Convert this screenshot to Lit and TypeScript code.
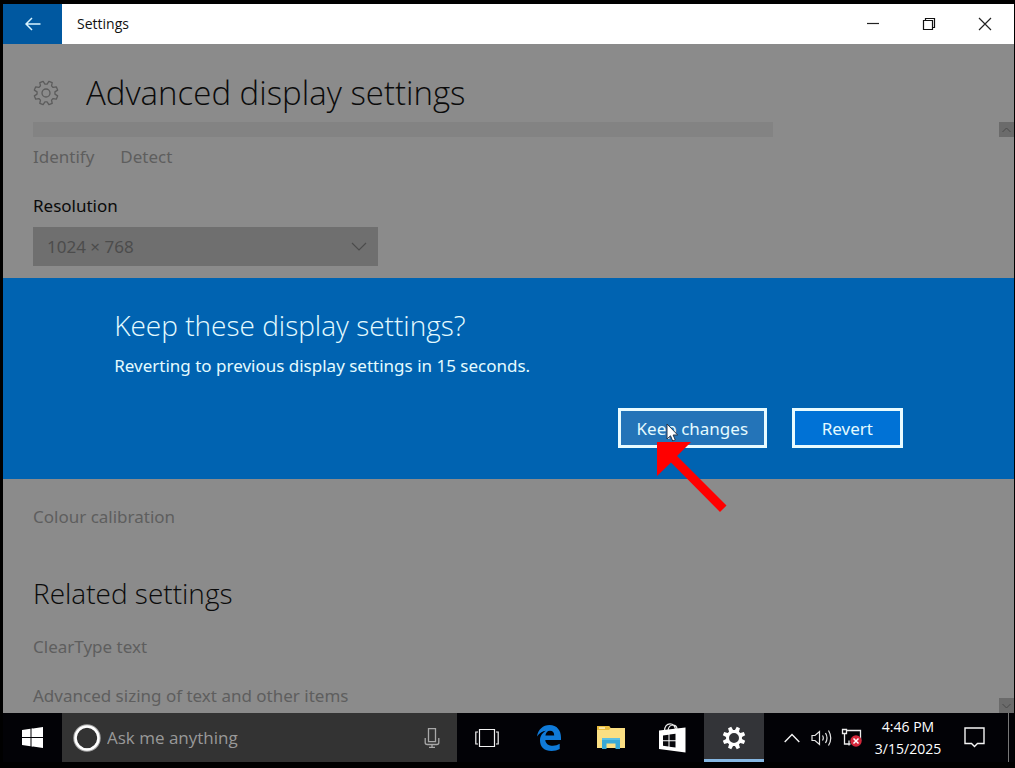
import { LitElement, html, css, svg } from "lit";
import { customElement, state } from "lit/decorators.js";

/** Outline of a cog with eight teeth, centred on 0,0. */
function cog(outer: number, inner: number): string {
  const points: string[] = [];
  const steps: [number, number][] = [
    [-0.36, inner],
    [-0.2, outer],
    [0.2, outer],
    [0.36, inner],
  ];
  for (let tooth = 0; tooth < 8; tooth++) {
    const base = (tooth * Math.PI) / 4 + Math.PI / 8;
    for (const [turn, radius] of steps) {
      const angle = base + turn * 0.75;
      points.push(`${(Math.cos(angle) * radius).toFixed(2)} ${(Math.sin(angle) * radius).toFixed(2)}`);
    }
  }
  return `M${points.join("L")}Z`;
}

const icons = {
  back: svg`<svg width="16" height="14" viewBox="0 0 16 14" fill="none" stroke="#d8f4ff" stroke-width="1.5"><path d="M15.500 7H1.500M7 1L1 7l6 6"/></svg>`,
  minimise: svg`<svg width="14" height="14" viewBox="0 0 14 14" stroke="#222" stroke-width="1.200"><path d="M1 6.500h12"/></svg>`,
  restore: svg`<svg width="14" height="14" viewBox="0 0 14 14" fill="none" stroke="#111" stroke-width="1.200"><path d="M1.500 3.500h9v9h-9zM3.500 3.500v-2h9v9h-2"/></svg>`,
  close: svg`<svg width="14" height="14" viewBox="0 0 14 14" stroke="#222" stroke-width="1.200"><path d="M1 1l12 12M13 1L1 13"/></svg>`,
  cogOutline: svg`<svg width="28" height="28" viewBox="-14 -14 28 28" fill="none" stroke="#5c5c5c" stroke-width="1.300" stroke-linejoin="round"><path d=${cog(12, 9)}/><circle r="4"/></svg>`,
  cogSolid: svg`<svg width="24" height="24" viewBox="-12 -12 24 24" fill="#fff" fill-rule="evenodd"><path d=${cog(11.5, 8) + "M5 0A5 5 0 1 0 -5 0A5 5 0 1 0 5 0Z"}/></svg>`,
  up: svg`<svg width="9" height="6" viewBox="0 0 9 6" fill="none" stroke="#4a4a4a"><path d="M.5 5l4-4 4 4"/></svg>`,
  down: svg`<svg width="9" height="6" viewBox="0 0 9 6" fill="none" stroke="#4a4a4a"><path d="M.5 1l4 4 4-4"/></svg>`,
  dropdown: svg`<svg width="16" height="9" viewBox="0 0 16 9" fill="none" stroke="#4c4c4c" stroke-width="1.200"><path d="M1 1l7 7 7-7"/></svg>`,
  start: svg`<svg width="21" height="21" viewBox="0 0 21 21" fill="#fff"><path d="M0 3l8.500-1.200V10H0zM9.500 1.600L21 0v10H9.500zM0 11h8.500v8.200L0 18zM9.500 11H21v10L9.500 19.400z"/></svg>`,
  ring: svg`<svg width="28" height="28" viewBox="0 0 28 28" fill="none"><circle cx="14" cy="14" r="12" stroke="#a5a5a5" stroke-width="3.500"/><circle cx="14" cy="14" r="11.500" stroke="#fff" stroke-width="2.500"/></svg>`,
  mic: svg`<svg width="16" height="20" viewBox="0 0 16 20" fill="none" stroke="#a8a8a8" stroke-width="1.300"><path d="M4.500.7h7v13h-7zM1.200 10v4.500q0 2 2 2h9.600q2 0 2-2V10M8 16.500v2.800M5 19.300h6"/></svg>`,
  taskView: svg`<svg width="24" height="20" viewBox="0 0 24 20" fill="none" stroke="#f2f2f2" stroke-width="1.200"><path d="M4.500 1.500h15v17h-15zM3 4H.8v12H3M21 4h2.200v12H21"/></svg>`,
  edge: svg`<svg width="24" height="26" viewBox="0 0 24 26" fill="#0f7ad8"><path d="M0 11.500C1 4.500 6 0 12.500 0 20 0 24 5.500 24 12.500V15H8.300c.3 4 3.600 5.800 7.600 5.800 2.500 0 4.800-.8 6.800-2V24c-2.200 1.300-5 2-8.200 2C7.500 26 3 22 3 15.500 3 11 5.500 7.600 9 5.800 5.500 6.200 2.300 8 0 11.500zM8.400 10.500h8.800c0-3-1.300-4.800-4.200-4.800S8.800 7.800 8.400 10.500z"/></svg>`,
  folder: svg`<svg width="28" height="23" viewBox="0 0 28 23"><path d="M0 0h12l1.500 2H28v20H0z" fill="#fbdf83"/><path d="M0 0h12l1.500 2-1.500 2H0z" fill="#e9bd3e"/><path d="M2 1.300h6v1.500H2z" fill="#fff3c4"/><path d="M5 12h18v11h-4.500v-5.500h-9V23H5z" fill="#39a9d6"/><path d="M5 12h18v2H5z" fill="#5cc0e4"/></svg>`,
  store: svg`<svg width="27" height="30" viewBox="0 0 27 30"><path d="M5.500 8C5.500 3 8 .8 11 .8s5 2.200 5.500 5.700M9 7.500C9.500 3.500 11.500 2 14 2s4 1.800 4 4.500" fill="none" stroke="#eee" stroke-width="1.200"/><path d="M0 7.500L26.500 4.500v25L0 26z" fill="#fff"/><path d="M4 12.500l5.500-.8v5.500H4zM10.500 11.500l6-.8v6.500h-6zM4 18.200h5.500v5.300L4 22.700zM10.500 18.200h6v6.300l-6-.8z" fill="#08080c"/></svg>`,
  chevron: svg`<svg width="16" height="10" viewBox="0 0 16 10" fill="none" stroke="#f2f2f2" stroke-width="1.400"><path d="M.7 9L8 1.500 15.300 9"/></svg>`,
  volume: svg`<svg width="22" height="18" viewBox="0 0 22 18" fill="none" stroke="#e6e6e6" stroke-width="1.200"><path d="M1 6.500h3L8.500 2.500v13L4 11.500H1zM11.500 6.500q1.600 2.500 0 5M14.500 4q3 5 0 10M17.500 1.500q4.500 7.500 0 15"/></svg>`,
  network: svg`<svg width="22" height="19" viewBox="0 0 22 19" fill="none" stroke="#ededed" stroke-width="1.300"><path d="M6 2.500h13.500V13M1.500 1.500h4v4h-4zM3.500 5.500v10.500h6M8 12.500v5"/><circle cx="15" cy="13" r="5.700" fill="#d4263a" stroke="none"/><path d="M12.500 10.500l5 5M17.500 10.500l-5 5" stroke="#fff" stroke-width="1.500"/></svg>`,
  action: svg`<svg width="21" height="21" viewBox="0 0 21 21" fill="none" stroke="#f5f5f5" stroke-width="1.400"><path d="M1 1h19v15.500h-6.500L10.500 19.500 7.500 16.500H1z"/></svg>`,
  cursor: svg`<svg width="13" height="19" viewBox="0 0 13 19"><path d="M1 1v15l3.500-3.200L6.700 18l2.600-1.100L7.100 12h4.600z" fill="#fff" stroke="#26364a"/></svg>`,
  pointer: svg`<svg width="70" height="71" viewBox="0 0 70 71"><path d="M0 0h34L20 14l49.500 49.500-6.500 6.500-49-49.500L0 34z" fill="#f00"/></svg>`,
};

@customElement("title-bar")
export class TitleBar extends LitElement {
  static styles = css`
    :host {
      display: flex;
      height: 40px;
      padding-right: 1px;
      background: #fff;
      color: #111;
    }
    button {
      display: grid;
      place-items: center;
      width: 56px;
      padding: 0;
      border: 0;
      background: none;
    }
    .back {
      width: 59px;
      background: #0058a0;
    }
    .name {
      flex: 1;
      margin: 0;
      padding-left: 15px;
      font-size: 14px;
      font-weight: 400;
      line-height: 40px;
    }
  `;

  render() {
    return html`
      <button class="back" aria-label="Back">${icons.back}</button>
      <h1 class="name">Settings</h1>
      <button aria-label="Minimise">${icons.minimise}</button>
      <button aria-label="Restore">${icons.restore}</button>
      <button aria-label="Close">${icons.close}</button>
    `;
  }
}

@customElement("settings-page")
export class SettingsPage extends LitElement {
  static styles = css`
    :host {
      display: flex;
      flex-direction: column;
      min-height: 0;
      background: #8b8b8b;
      color: #0a0a0a;
      font-family: "Noto Sans", "Open Sans", sans-serif;
    }
    .head {
      display: flex;
      align-items: center;
      gap: 26px;
      height: 78px;
      padding: 20px 29px 0;
      box-sizing: border-box;
    }
    h2,
    h3 {
      margin: 0;
      font-family: "Open Sans", "Noto Sans", sans-serif;
      font-weight: 300;
    }
    h2 {
      font-size: 33px;
      line-height: 58px;
    }
    h3 {
      margin: 44px 0 22px;
      font-size: 28px;
      line-height: 40px;
    }
    .body {
      display: flex;
      flex: 1;
      min-height: 0;
    }
    .list {
      flex: 1;
      overflow: hidden;
      padding-left: 30px;
    }
    .strip {
      max-width: 740px;
      height: 15px;
      background: #838383;
    }
    .links {
      display: flex;
      gap: 26px;
      margin-top: 8px;
    }
    a {
      display: block;
      width: fit-content;
      color: #5e5e5e;
      font-size: 17px;
      line-height: 24px;
      text-decoration: none;
    }
    .label {
      display: block;
      margin-top: 25px;
      font-size: 17px;
      line-height: 24px;
    }
    .picker {
      display: grid;
      align-items: center;
      width: 345px;
      height: 39px;
      margin-top: 9px;
      background: #6f6f6f;
    }
    .picker > * {
      grid-area: 1 / 1;
    }
    .picker svg {
      justify-self: end;
      margin-right: 11px;
      pointer-events: none;
    }
    select {
      width: 100%;
      height: 100%;
      padding: 0 14px;
      border: 0;
      background: none;
      color: #4c4c4c;
      font: inherit;
      font-size: 17px;
      appearance: none;
    }
    .calibration {
      margin-top: 239px;
    }
    .related {
      display: grid;
      gap: 25px;
    }
    .scroll {
      display: flex;
      flex-direction: column;
      justify-content: space-between;
      width: 15px;
    }
    .scroll button {
      display: grid;
      place-items: center;
      height: 15px;
      padding: 0;
      border: 0;
      background: #6b6b6b;
    }
  `;

  render() {
    return html`
      <header class="head">${icons.cogOutline}<h2>Advanced display settings</h2></header>
      <div class="body">
        <div class="list">
          <div class="strip"></div>
          <div class="links"><a href="#identify">Identify</a><a href="#detect">Detect</a></div>
          <label class="label" for="resolution">Resolution</label>
          <div class="picker">
            <select id="resolution"><option>1024 × 768</option></select>
            ${icons.dropdown}
          </div>
          <a class="calibration" href="#calibration">Colour calibration</a>
          <h3>Related settings</h3>
          <div class="related">
            <a href="#cleartype">ClearType text</a>
            <a href="#sizing">Advanced sizing of text and other items</a>
          </div>
        </div>
        <div class="scroll">
          <button aria-label="Scroll up">${icons.up}</button>
          <button aria-label="Scroll down">${icons.down}</button>
        </div>
      </div>
    `;
  }
}

@customElement("confirm-dialog")
export class ConfirmDialog extends LitElement {
  @state() private seconds = 15;

  static styles = css`
    :host {
      display: block;
      box-sizing: border-box;
      padding: 27px 11% 31px;
      background: #0063b1;
      color: #e4fbff;
      font-family: "Noto Sans", "Open Sans", sans-serif;
    }
    h2 {
      margin: 0;
      font-family: "Open Sans", "Noto Sans", sans-serif;
      font-size: 28px;
      font-weight: 300;
      line-height: 40px;
    }
    p {
      margin: 8px 0 30px;
      font-size: 17px;
      line-height: 25px;
    }
    .actions {
      display: flex;
      justify-content: flex-end;
      gap: 25px;
    }
    .slot {
      position: relative;
    }
    button {
      box-sizing: border-box;
      width: 111px;
      height: 40px;
      padding: 0;
      border: 3px solid #e8fbff;
      background: #0072d6;
      color: inherit;
      font: inherit;
      font-size: 17px;
    }
    .keep {
      width: 149px;
      background: #2474b8;
    }
    .cursor,
    .pointer {
      position: absolute;
      display: grid;
      pointer-events: none;
    }
    .cursor {
      left: 48px;
      top: 15px;
    }
    .pointer {
      left: 39px;
      top: 34px;
    }
  `;

  render() {
    return html`
      <h2>Keep these display settings?</h2>
      <p>Reverting to previous display settings in ${this.seconds} seconds.</p>
      <div class="actions">
        <div class="slot">
          <button class="keep">Keep changes</button>
          <span class="cursor">${icons.cursor}</span>
          <span class="pointer">${icons.pointer}</span>
        </div>
        <button>Revert</button>
      </div>
    `;
  }
}

@customElement("task-bar")
export class TaskBar extends LitElement {
  static styles = css`
    :host {
      display: flex;
      height: 49px;
      background: #020206;
      color: #fff;
    }
    button {
      display: grid;
      place-items: center;
      padding: 0;
      border: 0;
      background: none;
      color: inherit;
      font: inherit;
    }
    .start {
      width: 59px;
    }
    .search {
      display: flex;
      align-items: center;
      flex: 0 1 395px;
      box-sizing: border-box;
      gap: 6px;
      padding: 0 17px 0 11px;
      background: #333;
    }
    .search label {
      display: grid;
    }
    input {
      flex: 1;
      min-width: 0;
      padding: 0;
      border: 0;
      outline: 0;
      background: none;
      font: inherit;
      font-size: 17px;
    }
    input::placeholder {
      color: #999;
      opacity: 1;
    }
    .apps {
      display: grid;
      grid-template-columns: repeat(5, 60px);
      justify-content: space-between;
      width: 307px;
    }
    .apps .active {
      border-bottom: 3px solid #86b7e2;
      padding-top: 3px;
      background: #333438;
    }
    .tray {
      display: flex;
      flex: 1;
      justify-content: flex-end;
    }
    .tray button {
      width: 30px;
    }
    .tray .clock {
      width: 82px;
      align-content: center;
      font-size: 14px;
      line-height: 22px;
    }
    .tray .action {
      width: 50px;
      margin-right: 9px;
    }
    .tray .desktop {
      width: 6px;
      border-left: 1px solid #777;
    }
  `;

  render() {
    return html`
      <button class="start" aria-label="Start">${icons.start}</button>
      <div class="search">
        <label for="ask" aria-label="Search">${icons.ring}</label>
        <input id="ask" placeholder="Ask me anything" />
        <button aria-label="Speak">${icons.mic}</button>
      </div>
      <div class="apps">
        <button aria-label="Task view">${icons.taskView}</button>
        <button aria-label="Edge">${icons.edge}</button>
        <button aria-label="File Explorer">${icons.folder}</button>
        <button aria-label="Store">${icons.store}</button>
        <button class="active" aria-label="Settings">${icons.cogSolid}</button>
      </div>
      <div class="tray">
        <button aria-label="Show hidden icons">${icons.chevron}</button>
        <button aria-label="Volume">${icons.volume}</button>
        <button aria-label="Network">${icons.network}</button>
        <button class="clock"><span>4:46 PM</span><span>3/15/2025</span></button>
        <button class="action" aria-label="Action centre">${icons.action}</button>
        <button class="desktop" aria-label="Show desktop"></button>
      </div>
    `;
  }
}

@customElement("app-root")
export class AppRoot extends LitElement {
  static styles = css`
    :host {
      display: flex;
      flex-direction: column;
      box-sizing: border-box;
      height: 100vh;
      padding: 4px 1px 6px 3px;
      background: #000;
      font-family: "Open Sans", "Noto Sans", sans-serif;
    }
    .stage {
      display: grid;
      flex: 1;
      min-height: 0;
      grid-template-rows: minmax(0, 1fr);
    }
    .stage > * {
      grid-area: 1 / 1;
    }
    .dialog {
      z-index: 1;
      align-self: center;
    }
  `;

  render() {
    return html`
      <title-bar></title-bar>
      <main class="stage">
        <settings-page></settings-page>
        <confirm-dialog class="dialog" role="dialog" aria-label="Keep these display settings?"></confirm-dialog>
      </main>
      <task-bar></task-bar>
    `;
  }
}
